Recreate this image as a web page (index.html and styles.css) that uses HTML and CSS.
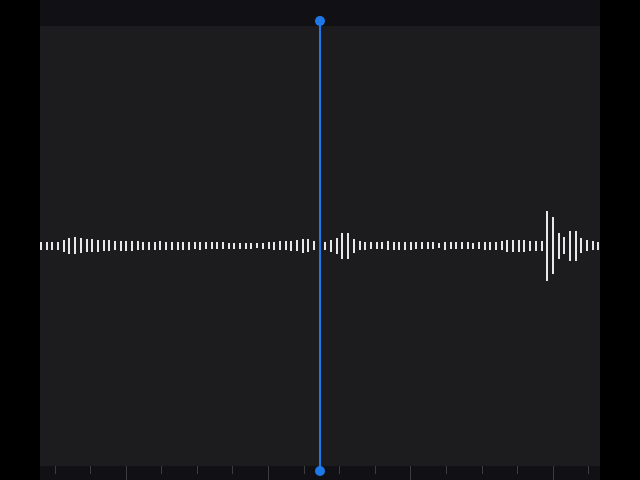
FILE: index.html
```html
<!DOCTYPE html>
<html>
<head>
<meta charset="utf-8">
<link rel="stylesheet" href="styles.css">
</head>
<body>
<div class="stage">
  <div class="topbar"></div>
  <div class="track">
    <div class="wave">
      <i style="height:8px"></i><i style="height:8px"></i><i style="height:8px"></i><i style="height:8px"></i><i style="height:12px"></i><i style="height:16px"></i><i style="height:17px"></i><i style="height:15px"></i><i style="height:13px"></i><i style="height:13px"></i>
      <i style="height:12px"></i><i style="height:11px"></i><i style="height:11px"></i><i style="height:9px"></i><i style="height:10px"></i><i style="height:10px"></i><i style="height:10px"></i><i style="height:9px"></i><i style="height:8px"></i><i style="height:8px"></i>
      <i style="height:8px"></i><i style="height:9px"></i><i style="height:8px"></i><i style="height:8px"></i><i style="height:8px"></i><i style="height:8px"></i><i style="height:8px"></i><i style="height:7px"></i><i style="height:8px"></i><i style="height:7px"></i>
      <i style="height:7px"></i><i style="height:7px"></i><i style="height:7px"></i><i style="height:6px"></i><i style="height:6px"></i><i style="height:6px"></i><i style="height:6px"></i><i style="height:6px"></i><i style="height:5px"></i><i style="height:6px"></i>
      <i style="height:7px"></i><i style="height:8px"></i><i style="height:9px"></i><i style="height:9px"></i><i style="height:10px"></i><i style="height:11px"></i><i style="height:14px"></i><i style="height:13px"></i><i style="height:9px"></i><i style="height:12px"></i>
      <i style="height:8px"></i><i style="height:12px"></i><i style="height:16px"></i><i style="height:26px"></i><i style="height:26px"></i><i style="height:14px"></i><i style="height:9px"></i><i style="height:8px"></i><i style="height:7px"></i><i style="height:7px"></i>
      <i style="height:7px"></i><i style="height:9px"></i><i style="height:8px"></i><i style="height:8px"></i><i style="height:8px"></i><i style="height:8px"></i><i style="height:7px"></i><i style="height:7px"></i><i style="height:7px"></i><i style="height:7px"></i>
      <i style="height:5px"></i><i style="height:8px"></i><i style="height:7px"></i><i style="height:7px"></i><i style="height:7px"></i><i style="height:7px"></i><i style="height:6px"></i><i style="height:7px"></i><i style="height:8px"></i><i style="height:8px"></i>
      <i style="height:8px"></i><i style="height:9px"></i><i style="height:12px"></i><i style="height:12px"></i><i style="height:12px"></i><i style="height:12px"></i><i style="height:10px"></i><i style="height:10px"></i><i style="height:10px"></i><i style="height:70px"></i>
      <i style="height:57px"></i><i style="height:26px"></i><i style="height:17px"></i><i style="height:30px"></i><i style="height:30px"></i><i style="height:15px"></i><i style="height:11px"></i><i style="height:9px"></i><i style="height:8px"></i>
    </div>
  </div>
  <div class="ruler">
    <span class="tick"></span><span class="tick"></span><span class="tick major"></span><span class="tick"></span>
    <span class="tick"></span><span class="tick"></span><span class="tick major"></span><span class="tick"></span>
    <span class="tick"></span><span class="tick"></span><span class="tick major"></span><span class="tick"></span>
    <span class="tick"></span><span class="tick"></span><span class="tick major"></span><span class="tick"></span>
  </div>
  <div class="playhead">
    <span class="knob knob-top"></span>
    <span class="knob knob-bottom"></span>
  </div>
</div>
</body>
</html>
```
FILE: styles.css
```css
html, body {
  margin: 0;
  padding: 0;
  background: #000;
  width: 640px;
  height: 480px;
  overflow: hidden;
}

.stage {
  position: relative;
  margin-left: 40px;
  width: 560px;
  height: 480px;
  display: flex;
  flex-direction: column;
  background: #1c1c1f;
}

.topbar {
  height: 26px;
  flex: none;
  background: #111015;
}

.track {
  flex: 1;
  display: flex;
  align-items: center;
}

.wave {
  width: 560px;
  display: flex;
  justify-content: space-between;
  align-items: center;
  margin-top: -1px;
}

.wave i {
  display: block;
  width: 2px;
  background: #e8e8ea;
}

.ruler {
  height: 14px;
  flex: none;
  background: #111015;
  display: flex;
  align-items: flex-start;
  gap: 34.6px;
  padding-left: 14.5px;
}

.tick {
  display: block;
  width: 1px;
  height: 8px;
  background: #3c3c41;
}

.tick.major {
  height: 14px;
}

.playhead {
  position: absolute;
  left: 279px;
  top: 21px;
  bottom: 9.5px;
  width: 2px;
  background: #1f78e8;
}

.knob {
  position: absolute;
  left: -4px;
  width: 10px;
  height: 10px;
  border-radius: 50%;
  background: #1f78e8;
}

.knob-top {
  top: -5px;
}

.knob-bottom {
  bottom: -5px;
}
```
